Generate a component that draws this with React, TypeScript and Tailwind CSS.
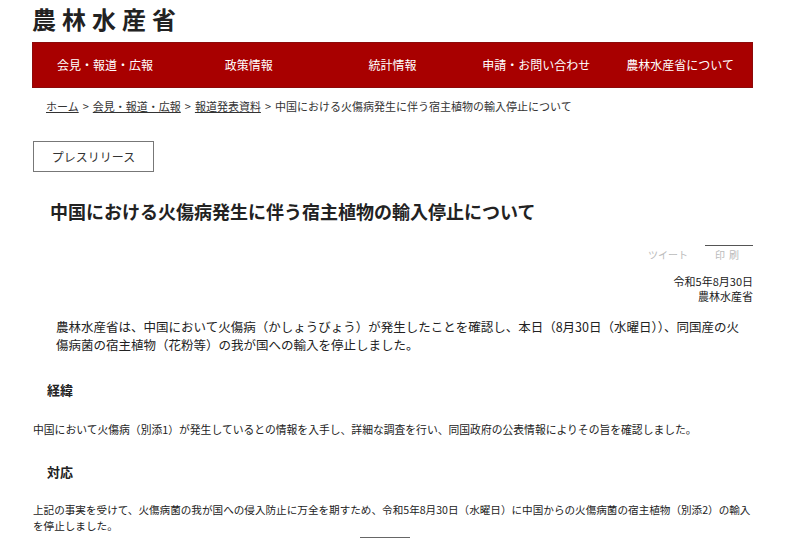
const navItems = ["会見・報道・広報", "政策情報", "統計情報", "申請・お問い合わせ", "農林水産省について"];

export default function App() {
  return (
    <div className="min-h-screen bg-white font-['Noto_Sans_CJK_JP',sans-serif] text-[#222]">
      <div className="ml-[32px] w-[721px]">
        {/* header */}
        <div className="h-[42px] pt-[6px]">
          <h1 className="text-[24px] leading-[26px] font-bold tracking-[6px] text-[#222]">農林水産省</h1>
        </div>
        <nav className="grid h-[46px] grid-cols-5 items-center border border-[#8c0a0a] bg-[#a80000]">
          {navItems.map((item) => (
            <div key={item} className="text-center text-[12px] text-white">
              {item}
            </div>
          ))}
        </nav>

        {/* breadcrumb */}
        <div className="mt-[10px] ml-[14px] flex gap-[4px] text-[11px] leading-[16px] text-[#333]">
          <span className="underline">ホーム</span>
          <span>&gt;</span>
          <span className="underline">会見・報道・広報</span>
          <span>&gt;</span>
          <span className="underline">報道発表資料</span>
          <span>&gt;</span>
          <span>中国における火傷病発生に伴う宿主植物の輸入停止について</span>
        </div>

        <div className="mt-[27px] ml-[1px] flex h-[31px] w-[121px] items-center justify-center border border-[#777] text-[12px] text-[#333]">
          プレスリリース
        </div>

        <h2 className="mt-[27px] ml-[18px] text-[18px] leading-[24px] font-bold text-[#222]">
          中国における火傷病発生に伴う宿主植物の輸入停止について
        </h2>

        {/* share */}
        <div className="mt-[22px] flex items-end justify-end text-[10px] leading-[14px] text-[#bbb]">
          <span className="mr-[17px]">ツイート</span>
          <span className="w-[48px] border-t border-[#555] pt-[2px] text-center tracking-[4px]">印刷</span>
        </div>

        <div className="mt-[12px] text-right text-[11px] leading-[15px] text-[#222]">
          <p>令和5年8月30日</p>
          <p>農林水産省</p>
        </div>

        <p className="mt-[14px] ml-[24px] whitespace-nowrap text-[12.5px] leading-[18px] text-[#222]">
          農林水産省は、中国において火傷病（かしょうびょう）が発生したことを確認し、本日（8月30日（水曜日））、同国産の火
          <br />
          傷病菌の宿主植物（花粉等）の我が国への輸入を停止しました。
        </p>

        <h3 className="mt-[27px] ml-[15px] text-[13px] leading-[18px] font-bold">経緯</h3>
        <p className="mt-[22px] ml-[1px] text-[10.8px] leading-[16px] text-[#222]">
          中国において火傷病（別添1）が発生しているとの情報を入手し、詳細な調査を行い、同国政府の公表情報によりその旨を確認しました。
        </p>

        <h3 className="mt-[26px] ml-[15px] text-[13px] leading-[18px] font-bold">対応</h3>
        <p className="mt-[21px] ml-[1px] whitespace-nowrap text-[10.6px] leading-[16px] text-[#222]">
          上記の事実を受けて、火傷病菌の我が国への侵入防止に万全を期すため、令和5年8月30日（水曜日）に中国からの火傷病菌の宿主植物（別添2）の輸入
          <br />
          を停止しました。
        </p>

        <div className="mt-[3px] ml-[328px] h-px w-[50px] bg-[#666]" />
      </div>
    </div>
  );
}
